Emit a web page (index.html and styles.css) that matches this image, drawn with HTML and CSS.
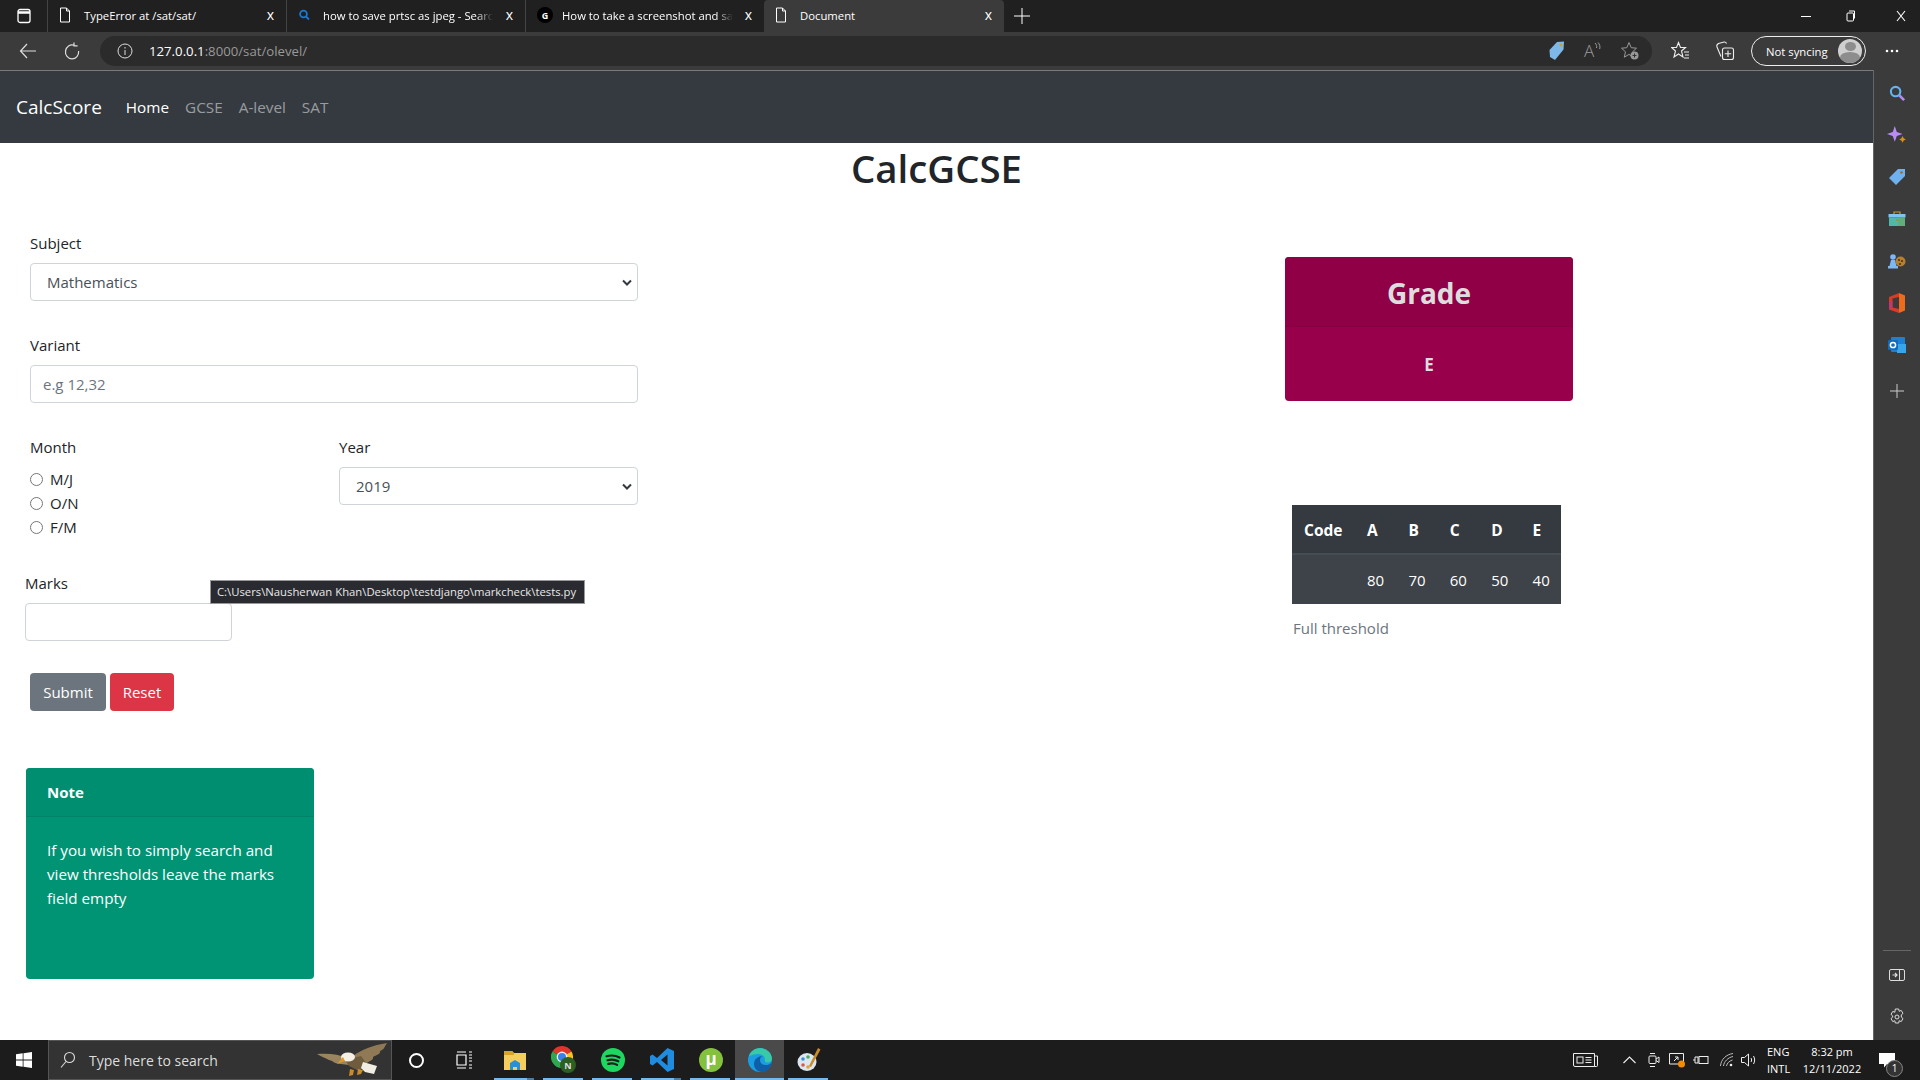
FILE: index.html
```html
<!DOCTYPE html>
<html lang="en">
<head>
  <meta charset="UTF-8">
  <title>Document</title>
  <link rel="stylesheet" href="styles.css">
</head>
<body>

<!-- browser tabs -->
<div class="tabbar">
  <div class="tab-menu">
    <svg width="14" height="16" viewBox="0 0 14 16" fill="none" stroke="#fff" stroke-width="1.3"><rect x="1" y="1.5" width="12" height="13" rx="2"/><path d="M1 4.5h12" stroke-width="2.5"/></svg>
  </div>
  <div class="tab">
    <svg class="tab-icon" width="12" height="16" viewBox="0 0 12 16" fill="none" stroke="#fff"><path d="M1.5 1h6l3 3v11h-9zM7.5 1v3h3"/></svg>
    <span class="tab-title tab-title-plain">TypeError at /sat/sat/</span>
    <span class="tab-close">x</span>
  </div>
  <div class="tab">
    <svg class="tab-icon" width="12" height="16" viewBox="0 0 12 16" fill="none" stroke="#1a78d2" stroke-width="1.8"><circle cx="5.5" cy="7" r="3.4"/><path d="M8 9.5l3 3"/></svg>
    <span class="tab-title">how to save prtsc as jpeg - Searc</span>
    <span class="tab-close">x</span>
  </div>
  <div class="tab">
    <span class="g-icon">G</span>
    <span class="tab-title tab-title-g">How to take a screenshot and sa</span>
    <span class="tab-close">x</span>
  </div>
  <div class="tab tab-active">
    <svg class="tab-icon" width="12" height="16" viewBox="0 0 12 16" fill="none" stroke="#fff"><path d="M1.5 1h6l3 3v11h-9zM7.5 1v3h3"/></svg>
    <span class="tab-title tab-title-plain">Document</span>
    <span class="tab-close">x</span>
  </div>
  <svg class="new-tab" width="16" height="16" viewBox="0 0 16 16" stroke="#fff" stroke-width="1"><path d="M8 0v16M0 8h16"/></svg>
  <div class="win-controls">
    <svg width="10" height="10" viewBox="0 0 10 10" stroke="#fff"><path d="M0 5.5h10"/></svg>
    <svg class="win-restore" width="10" height="12" viewBox="0 0 10 12" fill="none" stroke="#fff"><rect x="1" y="3" width="6.5" height="8" rx="1"/><path d="M3 1h5.5v7.5"/></svg>
    <svg width="10" height="12" viewBox="0 0 10 12" stroke="#fff" stroke-width="1.1"><path d="M1 1l8 10M9 1l-8 10"/></svg>
  </div>
</div>

<!-- address bar -->
<div class="toolbar">
  <svg class="tool-back" width="18" height="16" viewBox="0 0 18 16" fill="none" stroke="#ddd" stroke-width="1.2"><path d="M17 8H2M8 1L1.500 8 8 15"/></svg>
  <svg class="tool-reload" width="18" height="18" viewBox="0 0 18 18" fill="none" stroke="#ddd" stroke-width="1.2"><path d="M11 3.200A6.600 7 0 1 0 15.600 9M11 0.500v3.400h3.600"/></svg>
  <div class="address">
    <svg width="16" height="16" viewBox="0 0 16 16" fill="none" stroke="#ddd"><circle cx="8" cy="8" r="7"/><path d="M8 7v5M8 4v1.600"/></svg>
    <span class="url"><b>127.0.0.1</b>:8000/sat/olevel/</span>
    <div class="address-icons">
      <svg width="18" height="20" viewBox="0 0 18 20"><path d="M9 1l7-.5-.5 8L7 19l-5-3-.5-7z" fill="#7db8e8"/><circle cx="13" cy="4" r="1.500" fill="#d4a017"/></svg>
      <span class="read-aloud">A<svg width="7" height="9" viewBox="0 0 7 9" fill="none" stroke="#999"><path d="M1 1c1.500 1.500 2 3 1.500 5M4 .5c1.800 2 2.300 4 1.700 6.500"/></svg></span>
      <svg width="20" height="20" viewBox="0 0 20 20" fill="none" stroke="#999"><path d="M9 1.500l2.200 5.200 5.300.5-4 3.600 1.200 5.400L9 13.400 4.300 16.200l1.200-5.400-4-3.600 5.300-.5z"/><circle cx="14.500" cy="14.500" r="4" fill="#999" stroke="none"/><path d="M12.500 14.500h4M14.500 12.500v4" stroke="#333"/></svg>
    </div>
  </div>
  <svg class="tool-fav" width="20" height="20" viewBox="0 0 20 20" fill="none" stroke="#eee" stroke-width="1.1"><path d="M7.500 1.500l2 5h5l-4 3.500 1.500 6-4.500-3-4.500 3 1.500-6-4-3.500h5zM13 11h5M14 14h4M13 17h5"/></svg>
  <svg class="tool-coll" width="20" height="20" viewBox="0 0 20 20" fill="none" stroke="#eee" stroke-width="1.1"><path d="M6 15.500L2 6c-.5-1.500.5-3 1.500-3.500L9 1c1-.2 2 .2 2.500 1.500"/><rect x="7.500" y="7" width="11" height="11.500" rx="2"/><path d="M13 9.500v6.500M9.800 12.700h6.400"/></svg>
  <div class="profile">
    <span>Not syncing</span>
    <span class="avatar"><span class="avatar-head"></span><span class="avatar-body"></span></span>
  </div>
  <svg class="more" width="14" height="4" viewBox="0 0 14 4" fill="#fff"><circle cx="2" cy="2" r="1.300"/><circle cx="7" cy="2" r="1.300"/><circle cx="12" cy="2" r="1.300"/></svg>
</div>

<div class="middle">

  <div class="viewport">
    <nav class="navbar">
      <a class="brand" href="#">CalcScore</a>
      <a class="nav-link active" href="#">Home</a>
      <a class="nav-link" href="#">GCSE</a>
      <a class="nav-link" href="#">A-level</a>
      <a class="nav-link" href="#">SAT</a>
    </nav>

    <h1 class="page-title">CalcGCSE</h1>

    <div class="content">
      <div class="left-col">
        <form class="calc-form">
          <label class="form-label">Subject</label>
          <select class="form-control form-select">
            <option>Mathematics</option>
          </select>

          <label class="form-label variant-label">Variant</label>
          <input class="form-control" type="text" placeholder="e.g 12,32">

          <div class="month-year">
            <div class="month-col">
              <label class="form-label">Month</label>
              <div class="radio-row"><input type="radio" name="month"><span>M/J</span></div>
              <div class="radio-row"><input type="radio" name="month"><span>O/N</span></div>
              <div class="radio-row"><input type="radio" name="month"><span>F/M</span></div>
            </div>
            <div class="year-col">
              <label class="form-label">Year</label>
              <select class="form-control form-select">
                <option>2019</option>
              </select>
            </div>
          </div>

          <div class="marks-group">
            <label class="form-label">Marks</label>
            <input class="form-control marks-input" type="text">
          </div>

          <div class="buttons">
            <button class="btn btn-submit" type="button">Submit</button>
            <button class="btn btn-reset" type="button">Reset</button>
          </div>
        </form>

        <div class="note-card">
          <div class="note-header">Note</div>
          <div class="note-body">If you wish to simply search and view thresholds leave the marks field empty</div>
        </div>
      </div>

      <div class="right-col">
        <div class="grade-card">
          <div class="grade-header">Grade</div>
          <div class="grade-body">E</div>
        </div>
        <table class="threshold">
          <thead>
            <tr><th class="code-col">Code</th><th>A</th><th>B</th><th>C</th><th>D</th><th>E</th></tr>
          </thead>
          <tbody>
            <tr><td></td><td>80</td><td>70</td><td>60</td><td>50</td><td>40</td></tr>
          </tbody>
        </table>
        <p class="caption">Full threshold</p>
      </div>
    </div>

    <div class="tooltip">C:\Users\Nausherwan Khan\Desktop\testdjango\markcheck\tests.py</div>
  </div>

  <!-- edge sidebar -->
  <div class="sidebar">
    <div class="side-item"><svg width="17" height="17" viewBox="0 0 18 18" fill="none"><circle cx="7" cy="7" r="5" stroke="#63b4f0" stroke-width="2.200"/><path d="M11 11l5 5" stroke="#b48cf0" stroke-width="2.800"/></svg></div>
    <div class="side-item"><svg width="20" height="20" viewBox="0 0 18 18"><path d="M7 1l1.800 5.200L14 8l-5.200 1.800L7 15l-1.800-5.200L0 8l5.200-1.800z" fill="#b98cf5"/><path d="M14 10l1 2 2 1-2 1-1 2-1-2-2-1 2-1z" fill="#d9921a"/></svg></div>
    <div class="side-item"><svg width="18" height="18" viewBox="0 0 18 18"><path d="M10 1h7v7l-9 9-7-7z" fill="#6fb0ee"/><circle cx="13.500" cy="4.500" r="1.300" fill="#a8691a"/></svg></div>
    <div class="side-item"><svg width="18" height="16" viewBox="0 0 18 16"><path d="M6 3V1h6v2" fill="none" stroke="#c99a2e" stroke-width="1.200"/><rect x="0.500" y="3" width="17" height="3.500" fill="#7dc4ee"/><rect x="1" y="6.500" width="16" height="8.500" fill="#4fb8a8"/><rect x="10" y="6.500" width="7" height="8.500" fill="#5fae7c"/><circle cx="9" cy="9" r="1" fill="#b8862a"/></svg></div>
    <div class="side-item"><svg width="18" height="16" viewBox="0 0 18 16"><circle cx="5" cy="4" r="2.800" fill="#7db8f5"/><path d="M3 7h4l1.500 6H10v2.500H0V13h1.500z" fill="#7db8f5"/><circle cx="12.500" cy="8.500" r="5" fill="#b5812b"/><circle cx="11" cy="7" r="1" fill="#4a2f10"/><circle cx="14" cy="8" r="1" fill="#4a2f10"/><circle cx="12" cy="11" r="1" fill="#4a2f10"/></svg></div>
    <div class="side-item"><svg width="16" height="20" viewBox="0 0 16 20"><path d="M0 4l10-4v20L0 16.500z" fill="#d83b2a"/><path d="M10 0l6 2.500v15L10 20z" fill="#ec6b1c"/><path d="M3.500 5.500L10 4v12l-6.500-1.500z" fill="#3b3b3b"/><path d="M0 9l3.500-1v6.500L0 16.500z" fill="#c8356a"/></svg></div>
    <div class="side-item"><svg width="18" height="16" viewBox="0 0 18 16"><rect x="3" y="0" width="14" height="15" rx="1" fill="#1f7fd0"/><rect x="9" y="7" width="9" height="9" fill="#36a5ea"/><rect x="0" y="3" width="10" height="10" rx="1" fill="#0f6cc0"/><circle cx="5" cy="8" r="2.600" fill="none" stroke="#fff" stroke-width="1.500"/></svg></div>
    <div class="side-item side-plus"><svg width="14" height="14" viewBox="0 0 14 14" stroke="#ccc"><path d="M7 0v14M0 7h14"/></svg></div>
    <div class="side-spacer"></div>
    <div class="side-rule"></div>
    <div class="side-item"><svg width="16" height="12" viewBox="0 0 16 12" fill="none" stroke="#ddd"><rect x="0.500" y="0.500" width="15" height="11" rx="1.500"/><path d="M10.500 0.500v11"/><path d="M3.500 6h4M6 4l2 2-2 2" stroke-width="1.200"/></svg></div>
    <div class="side-item"><svg width="16" height="18" viewBox="0 0 16 18" fill="none" stroke="#ddd"><path d="M6.300 1h3.400l.5 2.300 2-.9 1.800 3-1.700 1.500v2.200l1.700 1.500-1.800 3-2-.9-.5 2.300H6.300l-.5-2.300-2 .9-1.800-3 1.700-1.500V7.900L2 6.400l1.800-3 2 .9z"/><circle cx="8" cy="9" r="2"/></svg></div>
  </div>
</div>

<!-- windows taskbar -->
<div class="taskbar">
  <div class="start">
    <svg width="16" height="16" viewBox="0 0 16 16" fill="#fff"><path d="M0 2.300l6.700-1V7.600H0zM7.500 1.200L16 0v7.600H7.500zM0 8.400h6.700v6.300l-6.700-1zM7.500 8.400H16V16l-8.500-1.200z"/></svg>
  </div>
  <div class="search-box">
    <svg width="16" height="18" viewBox="0 0 16 18" fill="none" stroke="#ddd" stroke-width="1.100"><circle cx="9.500" cy="6.500" r="5"/><path d="M6 10.500L1 16.500"/></svg>
    <span class="search-text">Type here to search</span>
    <svg class="eagle" width="70" height="36" viewBox="0 0 70 36">
      <path d="M36 14C44 8 56 3 70 1c-3 4-2 6-7 8 1 3-4 4-7 6 1 3-4 4-6 6l-8 6-10-6z" fill="#8f7a55"/>
      <path d="M30 16C22 12 11 11 0 12c5 3 9 4 12 6 5 1 5 4 12 4l8 1z" fill="#9a8560"/>
      <path d="M28 18l16-4 6 8-8 7-10-5z" fill="#6f5c3e"/>
      <ellipse cx="31" cy="15" rx="7" ry="4.500" fill="#f5f0e6"/>
      <path d="M26 15l-6 7 8-3z" fill="#dc9a2a"/>
      <path d="M46 20l14 4-3 8-9-2-4-4z" fill="#f2ede3"/>
      <path d="M33 27l-1 7 4-1 1-5zM41 27l-1 6 4-1 2-4z" fill="#c98a2a"/>
    </svg>
  </div>
  <div class="task-btn"><svg width="17" height="17" viewBox="0 0 17 17" fill="none" stroke="#fff" stroke-width="2"><circle cx="8.500" cy="8.500" r="6.500"/></svg></div>
  <div class="task-btn"><svg width="18" height="18" viewBox="0 0 18 18" fill="none" stroke="#fff" stroke-width="1.200"><path d="M2 4h9v10H2zM2 1h9M2 17h9M14 1h3M14 4h3M14 7h3M14 10h3M14 14h3M14 17h3"/></svg></div>

  <div class="apps">
    <div class="app app-stack">
      <svg width="22" height="20" viewBox="0 0 22 20"><path d="M0 1h8l2 2h12v17H0z" fill="#f4ce5c"/><path d="M0 1h8l2 2v2H0z" fill="#d9a22b"/><path d="M6 20v-7l5-3 5 3v7h-3v-3H9v3z" fill="#2b8fd8"/></svg>
    </div>
    <div class="app">
      <svg width="26" height="28" viewBox="0 0 26 28"><path d="M11 11L1.470 5.500A11 11 0 0 1 20.530 5.500z" fill="#e0352b"/><path d="M11 11L11 22A11 11 0 0 1 1.470 5.500z" fill="#2fa650"/><path d="M11 11L20.530 5.500A11 11 0 0 1 11 22z" fill="#f7c325"/><circle cx="11" cy="11" r="5.400" fill="#f2f2f2"/><circle cx="11" cy="11" r="4" fill="#3a80e8"/><circle cx="17" cy="19" r="8" fill="#2d5e22"/><text class="badge-n" x="17" y="22.500" text-anchor="middle">N</text></svg>
    </div>
    <div class="app">
      <svg width="24" height="24" viewBox="0 0 24 24" fill="none"><circle cx="12" cy="12" r="12" fill="#1ed760"/><path d="M5.500 8.300c4.500-1.300 9-1 13 1.200M6.500 12.200c3.800-1 7.500-.7 10.800 1.100M7.300 15.900c3-.8 6-.6 8.800 1" stroke="#1c1c1c" stroke-width="2.200" stroke-linecap="round"/></svg>
    </div>
    <div class="app app-stack">
      <svg width="24" height="24" viewBox="0 0 24 24"><path d="M17.500 0L24 3v18l-6.500 3L7 14l-4.500 3.500L0 16V8l2.500-1.500L7 10zM17.500 6.500L11 12l6.500 5.500z" fill="#1f8ce0"/></svg>
    </div>
    <div class="app">
      <svg width="24" height="24" viewBox="0 0 24 24"><circle cx="12" cy="12" r="12" fill="#84c13c"/><text class="badge-mu" x="12" y="17" text-anchor="middle">µ</text></svg>
    </div>
    <div class="app app-active">
      <svg width="24" height="24" viewBox="0 0 24 24"><circle cx="12" cy="12" r="12" fill="#1b9de2"/><path d="M24 12c0 3-3 5-6 5-4 0-6-2-6-5 0-2 1-3.500 3-4-5 0-9 3-9 8 0 4 3 8 8 8 5.500 0 10-5 10-12z" fill="#0f5fa8"/><path d="M1 8.500C2.500 3.500 7 0 12 0c6.500 0 12 5 12 11 0 2-2 3.500-4.500 3.500-1.500 0-2.500-.5-2.500-1.500C17 8 14 6 10.500 6 6.500 6 3 7 1 8.500z" fill="#37c9a8"/></svg>
    </div>
    <div class="app">
      <svg width="24" height="26" viewBox="0 0 24 26"><ellipse cx="10" cy="15" rx="9.500" ry="9" fill="#dce6ef"/><circle cx="6" cy="12" r="1.800" fill="#3a8fd8"/><circle cx="6" cy="18" r="1.800" fill="#d85a4a"/><circle cx="11" cy="20" r="1.800" fill="#e0a33a"/><circle cx="11" cy="10" r="1.800" fill="#4aa860"/><path d="M21 1l2.500 1.500L14 20l-2-1z" fill="#c98a2a"/></svg>
    </div>
  </div>

  <div class="tray">
    <svg class="tray-news" width="25" height="14" viewBox="0 0 25 14" fill="none" stroke="#eee"><path d="M.5.500h21v13H2A1.500 1.500 0 0 1 .5 12zM21.500 3h3v9.500a1 1 0 0 1-1 1h-2"/><rect x="4" y="4" width="6" height="6"/><path d="M12.500 4.500h6M12.500 7h6M12.500 9.500h6"/></svg>
    <svg class="tray-chevron" width="13" height="8" viewBox="0 0 13 8" fill="none" stroke="#eee" stroke-width="1.100"><path d="M.5 7l6-6 6 6"/></svg>
    <svg class="tray-video" width="12" height="16" viewBox="0 0 12 16" fill="none" stroke="#eee"><rect x="1" y="4" width="7" height="7.500" rx="1"/><path d="M8 7l3-2v5.500l-3-2M2 1.500h5M2 14.500h5"/></svg>
    <svg class="tray-screen" width="17" height="16" viewBox="0 0 17 16" fill="none" stroke="#eee"><path d="M.5 1.500h14V12H.5z"/><path d="M5 9l4-4M6 5h3v3"/><circle cx="12.500" cy="12" r="3.500" fill="#f58a07" stroke="none"/></svg>
    <svg class="tray-batt" width="16" height="12" viewBox="0 0 16 12" fill="none" stroke="#eee"><rect x="6" y="2.500" width="9" height="7"/><path d="M0 6h2M2 3h3v6H2z"/></svg>
    <svg class="tray-wifi" width="14" height="14" viewBox="0 0 14 14" fill="none" stroke="#bbb"><path d="M.5 13C1 6.500 6 1.500 13 .5M3.500 13C4 8.500 8 4.500 13 3.500M6.500 13c.4-2.500 2.500-5 6-6"/><circle cx="11" cy="12" r="1.300" fill="#eee" stroke="none"/></svg>
    <svg class="tray-vol" width="16" height="14" viewBox="0 0 16 14" fill="none" stroke="#eee"><path d="M.5 4.500h3l4-3.500v12l-4-3.500h-3zM10 5c.8 1.200.8 2.800 0 4M12.500 3c1.500 2.500 1.500 5.500 0 8"/></svg>
    <div class="lang"><span>ENG</span><span>INTL</span></div>
    <div class="clock"><span>8:32 pm</span><span>12/11/2022</span></div>
    <div class="notify">
      <svg width="16" height="16" viewBox="0 0 16 16" fill="#fff"><path d="M0 0h16v11H8l-3 3.500V11H0z"/></svg>
      <span class="notify-count">1</span>
    </div>
  </div>
</div>

</body>
</html>
```

FILE: styles.css
```css
body {
  font-family: "Open Sans", "Noto Sans", sans-serif;
  margin: 0;
  padding: 0;
  height: 1080px;
  width: 1920px;
  overflow: hidden;
  display: flex;
  flex-direction: column;
  background-color: #fff;
  color: #212529;
}

/* tabs */
.tabbar {
  height: 32px;
  background-color: #202020;
  display: flex;
  align-items: center;
  color: #fff;
  font-size: 11.3px;
  flex-shrink: 0;
}
.tab-menu {
  width: 47px;
  display: flex;
  justify-content: center;
}
.tab {
  width: 239px;
  height: 32px;
  display: flex;
  align-items: center;
  padding: 0 0 2px 11px;
  box-sizing: border-box;
  border-left: 1px solid #444;
  position: relative;
}
.tab-active {
  background-color: #3b3b3b;
  border-left: none;
  border-radius: 4px 4px 0 0;
  width: 240px;
}
.tab-icon {
  flex-shrink: 0;
}
.g-icon {
  width: 16px;
  height: 16px;
  border-radius: 50%;
  background-color: #000;
  font-size: 9px;
  font-weight: bold;
  display: flex;
  align-items: center;
  justify-content: center;
  flex-shrink: 0;
}
.tab-title {
  margin-left: 13px;
  white-space: nowrap;
  -webkit-mask-image: linear-gradient(to right, #000 90%, transparent);
  mask-image: linear-gradient(to right, #000 90%, transparent);
}
.tab-title-plain {
  -webkit-mask-image: none;
  mask-image: none;
}
.tab-title-g {
  margin-left: 9px;
}
.tab-close {
  position: absolute;
  right: 12px;
  top: 7px;
  font-size: 14px;
  line-height: 16px;
}
.new-tab {
  margin-left: 10px;
}
.win-controls {
  margin-left: auto;
  width: 135px;
  display: flex;
  justify-content: space-between;
  align-items: center;
  padding: 0 14px 0 16px;
  box-sizing: border-box;
}
.win-restore {
  margin-right: 5px;
}

/* address bar */
.toolbar {
  height: 38px;
  background-color: #3b3b3b;
  display: flex;
  align-items: center;
  flex-shrink: 0;
}
.tool-back {
  margin-left: 19px;
}
.tool-reload {
  margin-left: 26px;
}
.address {
  margin-left: 19px;
  width: 1552px;
  height: 30px;
  background-color: #2b2b2b;
  border-radius: 15px;
  display: flex;
  align-items: center;
  padding: 0 12px 0 17px;
  box-sizing: border-box;
  font-size: 13.2px;
}
.url {
  margin-left: 16px;
  color: #999;
}
.url b {
  color: #fff;
  font-weight: normal;
}
.address-icons {
  margin-left: auto;
  display: flex;
  align-items: center;
  gap: 18px;
}
.read-aloud {
  color: #999;
  font-size: 17px;
  font-weight: 300;
  width: 18px;
  line-height: 18px;
  display: flex;
  align-items: flex-start;
}
.tool-fav {
  margin-left: 19px;
}
.tool-coll {
  margin-left: 24px;
}
.profile {
  margin-left: 16px;
  width: 115px;
  height: 30px;
  border: 1px solid #eee;
  border-radius: 15px;
  box-sizing: border-box;
  display: flex;
  align-items: center;
  justify-content: space-between;
  padding: 0 3px 0 14px;
  color: #fff;
  font-size: 11.3px;
  white-space: nowrap;
}
.avatar {
  width: 24px;
  height: 24px;
  border-radius: 50%;
  background-color: #cfcfcf;
  overflow: hidden;
  display: flex;
  flex-direction: column;
  align-items: center;
}
.avatar-head {
  width: 11px;
  height: 11px;
  margin-top: 3px;
  border-radius: 50%;
  background-color: #8d8d8d;
}
.avatar-body {
  width: 20px;
  height: 14px;
  margin-top: 1px;
  border-radius: 50%;
  background-color: #8d8d8d;
}
.more {
  margin-left: 19px;
}

/* page */
.middle {
  flex: 1;
  display: flex;
  min-height: 0;
}
.viewport {
  flex: 1;
  position: relative;
  min-width: 0;
}
.navbar {
  height: 73px;
  background-color: #343a40;
  border-top: 1px solid #7a7a7a;
  box-sizing: border-box;
  display: flex;
  align-items: center;
  padding-left: 16px;
  font-size: 15.3px;
}
.navbar a {
  text-decoration: none;
}
.brand {
  color: #fff;
  font-size: 19px;
  margin-right: 16px;
}
.nav-link {
  color: rgba(255, 255, 255, 0.5);
  padding: 0 8px;
}
.nav-link.active {
  color: #fff;
}
.page-title {
  margin: 0;
  height: 48px;
  line-height: 48px;
  margin-top: 1px;
  text-align: center;
  font-size: 38.4px;
  font-weight: 600;
}
.content {
  display: flex;
  font-size: 15px;
}
.left-col {
  width: 638px;
  padding-top: 39px;
  padding-left: 30px;
  box-sizing: border-box;
}
.form-label {
  display: block;
  height: 24px;
  line-height: 24px;
  margin-bottom: 8px;
}
.form-control {
  display: block;
  width: 100%;
  height: 38px;
  box-sizing: border-box;
  border: 1px solid #ced4da;
  border-radius: 4px;
  background-color: #fff;
  color: #495057;
  font-family: inherit;
  font-size: 15px;
  padding: 6px 12px;
}
.form-control::placeholder {
  color: #6c757d;
}
.form-select {
  appearance: none;
  -webkit-appearance: none;
  padding-left: 16px;
  background-image: url("data:image/svg+xml,%3Csvg xmlns='http://www.w3.org/2000/svg' width='10' height='7' viewBox='0 0 10 7'%3E%3Cpath d='M1 1.500l4 4 4-4' fill='none' stroke='%23343a40' stroke-width='2'/%3E%3C/svg%3E");
  background-repeat: no-repeat;
  background-position: right 5px center;
}
.variant-label {
  margin-top: 32px;
}
.month-year {
  display: flex;
  margin-top: 32px;
}
.month-col {
  width: 309px;
}
.year-col {
  width: 299px;
}
.radio-row {
  display: flex;
  align-items: center;
  height: 24px;
}
.radio-row input {
  width: 13px;
  height: 13px;
  margin: 0 7px 0 0;
}
.marks-group {
  margin: 32px 0 0 -5px;
  width: 207px;
}
.buttons {
  display: flex;
  gap: 4px;
  margin-top: 32px;
}
.btn {
  height: 38px;
  border: none;
  border-radius: 4px;
  color: #fff;
  font-family: inherit;
  font-size: 15px;
  cursor: pointer;
}
.btn-submit {
  width: 76px;
  background-color: #6c757d;
}
.btn-reset {
  width: 64px;
  background-color: #dc3545;
}
.note-card {
  margin: 57px 0 0 -4px;
  width: 288px;
  height: 211px;
  background-color: #009475;
  border-radius: 4px;
  color: #fff;
  overflow: hidden;
}
.note-header {
  height: 49px;
  box-sizing: border-box;
  padding: 12px 21px 0;
  background-color: #008e70;
  border-bottom: 1px solid #008267;
  font-weight: bold;
  line-height: 24px;
}
.note-body {
  padding: 21px 21px 0;
  line-height: 24px;
  font-size: 15.2px;
}
.right-col {
  margin-left: 647px;
  padding-top: 65px;
}
.grade-card {
  width: 288px;
  height: 144px;
  background-color: #99004c;
  border-radius: 4px;
  color: #ddd;
  text-align: center;
  overflow: hidden;
}
.grade-header {
  height: 70px;
  line-height: 72px;
  background-color: #8f0047;
  border-bottom: 1px solid #850042;
  box-sizing: border-box;
  font-size: 28px;
  font-weight: bold;
}
.grade-body {
  height: 74px;
  line-height: 75px;
  font-weight: bold;
  font-size: 17px;
}
.threshold {
  margin: 104px 0 0 7px;
  border-collapse: collapse;
  width: 269px;
  color: #fff;
  background-color: #343a40;
  table-layout: fixed;
}
.threshold th {
  height: 49px;
  padding: 2px 0 0 13px;
  box-sizing: border-box;
  text-align: left;
  font-weight: bold;
  font-size: 15.5px;
  width: 41.4px;
  border-bottom: 2px solid #454d55;
}
.threshold th.code-col {
  width: 62px;
  padding-left: 12px;
}
.threshold td {
  height: 49px;
  padding: 0 0 0 13px;
  background-color: #3d4349;
  font-size: 15px;
}
.caption {
  margin: 12px 0 0 8px;
  color: #6c757d;
  line-height: 24px;
}
.tooltip {
  position: absolute;
  left: 210px;
  top: 510px;
  height: 24px;
  width: 375px;
  box-sizing: border-box;
  padding-left: 6px;
  line-height: 22px;
  background-color: #2a2b30;
  border: 1px solid #999;
  color: #e8e8e8;
  font-size: 11.3px;
  white-space: nowrap;
}

/* edge sidebar */
.sidebar {
  width: 47px;
  background-color: #3b3b3b;
  border-left: 1px solid #666;
  box-sizing: border-box;
  display: flex;
  flex-direction: column;
  align-items: center;
  padding: 2px 0;
}
.side-item {
  height: 42px;
  display: flex;
  align-items: center;
  justify-content: center;
  flex-shrink: 0;
}
.side-plus {
  margin-top: 4px;
}
.side-spacer {
  flex: 1;
}
.side-rule {
  width: 28px;
  height: 1px;
  background-color: #666;
  margin-bottom: 3px;
}

/* taskbar */
.taskbar {
  height: 40px;
  background-color: #1c1c1c;
  display: flex;
  align-items: center;
  flex-shrink: 0;
  color: #fff;
}
.start {
  width: 48px;
  display: flex;
  justify-content: center;
}
.search-box {
  width: 344px;
  height: 40px;
  box-sizing: border-box;
  background-color: #333;
  border: 1px solid #555;
  display: flex;
  align-items: center;
  padding-left: 11px;
  color: #ddd;
  font-size: 14px;
}
.search-text {
  margin-left: 13px;
}
.eagle {
  margin-left: auto;
  margin-right: 4px;
}
.task-btn {
  width: 48px;
  display: flex;
  justify-content: center;
}
.apps {
  margin-left: 2px;
  display: flex;
}
.app {
  width: 49px;
  height: 40px;
  display: flex;
  align-items: center;
  justify-content: center;
  position: relative;
}
.app::after {
  content: "";
  position: absolute;
  left: 4px;
  right: 5px;
  bottom: 0;
  height: 2px;
  background-color: #76b9ed;
}
.app-stack::after {
  background-image: linear-gradient(to right, #76b9ed 82%, #4d7d9f 82%);
}
.app-active {
  background-color: #4a4a4a;
}
.app-active::after {
  left: 0;
  right: 0;
}
.badge-n {
  fill: #ddd;
  font-size: 9px;
  font-weight: bold;
  font-family: "Open Sans", sans-serif;
}
.badge-mu {
  fill: #fff;
  font-size: 17px;
  font-weight: bold;
  font-family: "Open Sans", sans-serif;
}
.tray {
  margin-left: auto;
  display: flex;
  align-items: center;
  font-size: 11px;
  padding-right: 13px;
}
.tray-chevron {
  margin-left: 25px;
}
.tray-video {
  margin-left: 12px;
}
.tray-screen {
  margin-left: 9px;
}
.tray-batt {
  margin-left: 7px;
}
.tray-wifi {
  margin-left: 11px;
}
.tray-vol {
  margin-left: 7px;
}
.lang,
.clock {
  display: flex;
  flex-direction: column;
  line-height: 17px;
  white-space: nowrap;
}
.lang {
  margin-left: 10px;
  width: 24px;
}
.clock {
  margin-left: 12px;
  width: 58px;
  align-items: center;
}
.notify {
  margin-left: 18px;
  position: relative;
  width: 28px;
  height: 40px;
  box-sizing: border-box;
  padding-top: 13px;
}
.notify-count {
  position: absolute;
  left: 7px;
  top: 20px;
  width: 15px;
  height: 15px;
  border-radius: 50%;
  border: 1px solid #888;
  background-color: #333;
  text-align: center;
  line-height: 15px;
  font-size: 10px;
}
```
